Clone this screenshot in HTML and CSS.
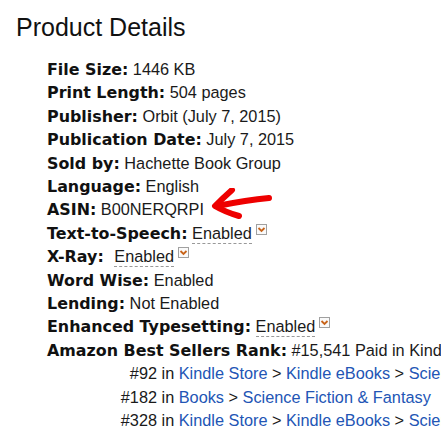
FILE: index.html
```html
<!DOCTYPE html>
<html>
<head>
<meta charset="utf-8">
<link rel="stylesheet" href="styles.css">
</head>
<body>
<div class="page">
  <h2 class="title">Product Details</h2>
  <ul class="details">
    <li><b>File Size:</b> 1446 KB</li>
    <li><b>Print Length:</b> 504 pages</li>
    <li><b>Publisher:</b> Orbit (July 7, 2015)</li>
    <li><b>Publication Date:</b> July 7, 2015</li>
    <li><b>Sold by:</b> Hachette Book Group</li>
    <li><b>Language:</b> English</li>
    <li class="asin"><b>ASIN:</b> B00NERQRPI
      <svg class="arrow" width="70" height="36" viewBox="0 0 70 36">
        <path d="M62 10 Q40 12 10 18" fill="none" stroke="#ee0000" stroke-width="6" stroke-linecap="round"/>
        <path d="M25 2 Q16 10 8 18 Q18 24 32 28" fill="none" stroke="#ee0000" stroke-width="6" stroke-linecap="round" stroke-linejoin="round"/>
      </svg>
    </li>
    <li><b>Text-to-Speech:</b> <span class="dotted">Enabled</span><span class="pop"><svg width="9" height="9" viewBox="0 0 9 9"><path d="M1.5 3 L4.5 6 L7.5 3" fill="none" stroke="#c8641a" stroke-width="1.8"/></svg></span></li>
    <li><b>X-Ray:</b> <span class="dotted gap">Enabled</span><span class="pop"><svg width="9" height="9" viewBox="0 0 9 9"><path d="M1.5 3 L4.5 6 L7.5 3" fill="none" stroke="#c8641a" stroke-width="1.8"/></svg></span></li>
    <li><b>Word Wise:</b> Enabled</li>
    <li><b>Lending:</b> Not Enabled</li>
    <li><b>Enhanced Typesetting:</b> <span class="dotted">Enabled</span><span class="pop"><svg width="9" height="9" viewBox="0 0 9 9"><path d="M1.5 3 L4.5 6 L7.5 3" fill="none" stroke="#c8641a" stroke-width="1.8"/></svg></span></li>
    <li><b>Amazon Best Sellers Rank:</b> #15,541 Paid in Kindle Store (See Top 100 Paid in Kindle Store)
      <ul class="ranks">
        <li><span class="rank">#92</span> in <a href="#">Kindle Store</a> &gt; <a href="#">Kindle eBooks</a> &gt; <a href="#">Science Fiction &amp; Fantasy</a></li>
        <li><span class="rank">#182</span> in <a href="#">Books</a> &gt; <a href="#">Science Fiction &amp; Fantasy</a></li>
        <li><span class="rank">#328</span> in <a href="#">Kindle Store</a> &gt; <a href="#">Kindle eBooks</a> &gt; <a href="#">Science Fiction &amp; Fantasy</a></li>
      </ul>
    </li>
  </ul>
</div>
</body>
</html>
```

FILE: styles.css
```css
html, body {
  margin: 0;
  padding: 0;
  background: #ffffff;
  overflow: hidden;
}
.page {
  padding: 13px 0 0 16px;
  font-family: "Liberation Sans", Arial, sans-serif;
  color: #1a1a1a;
  white-space: nowrap;
}
.title {
  margin: 0;
  font-size: 25px;
  line-height: 29px;
  font-weight: normal;
  color: #111;
}
.details {
  list-style: none;
  margin: 16px 0 0 0;
  padding: 0 0 0 31px;
  font-size: 16.3px;
  line-height: 23.4px;
}
.details b {
  font-family: "DejaVu Sans", Verdana, sans-serif;
  font-size: 15.9px;
  font-weight: bold;
  color: #111;
}
.asin {
  position: relative;
}
.arrow {
  position: absolute;
  left: 160px;
  top: -10px;
}
.dotted {
  border-bottom: 1px dashed #999;
  padding-bottom: 1px;
}
.gap {
  margin-left: 6px;
}
.pop {
  display: inline-block;
  width: 9px;
  height: 9px;
  border: 1px solid #a0a0a0;
  background: #fafafa;
  margin-left: 4px;
  vertical-align: 5px;
  line-height: 0;
}
.ranks {
  list-style: none;
  margin: 0;
  padding: 0 0 0 63px;
}
.rank {
  display: inline-block;
  width: 47px;
  text-align: right;
}
.ranks a {
  color: #2255b5;
  text-decoration: none;
}
```
